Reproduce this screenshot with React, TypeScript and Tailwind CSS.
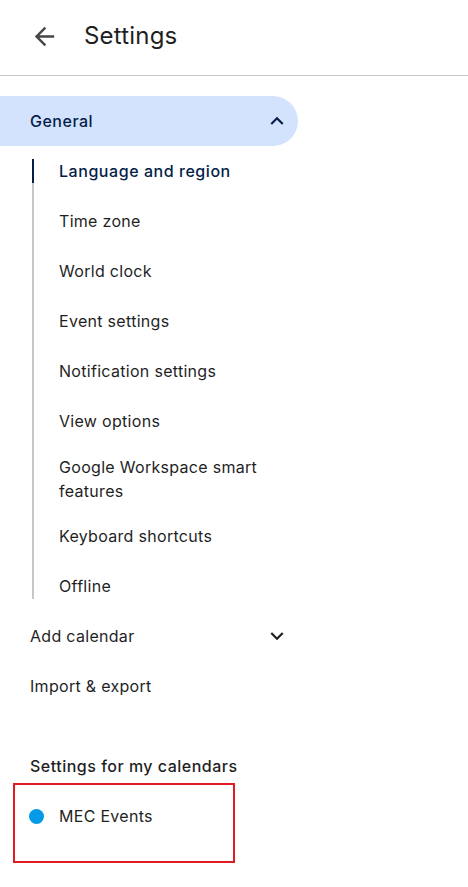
const subItems = [
  'Language and region',
  'Time zone',
  'World clock',
  'Event settings',
  'Notification settings',
  'View options',
  'Google Workspace smart features',
  'Keyboard shortcuts',
  'Offline',
]

const ExpandLess = ({ className }: { className?: string }) => (
  <svg viewBox="0 0 24 24" width={26} height={26} className={className} fill="currentColor">
    <path d="M12 8l-6 6 1.41 1.41L12 10.83l4.59 4.58L18 14z" />
  </svg>
)

const ExpandMore = ({ className }: { className?: string }) => (
  <svg viewBox="0 0 24 24" width={26} height={26} className={className} fill="currentColor">
    <path d="M16.59 8.59L12 13.17 7.41 8.59 6 10l6 6 6-6z" />
  </svg>
)

const App = () => {
  return (
    <div className="w-[468px] min-h-[887px] bg-white text-[#1f1f1f] font-['Inter',sans-serif] text-[16px] tracking-[0.3px]">
      <header className="h-[76px] flex items-center pb-[3px] border-b border-[#c7c7c7]">
        <svg viewBox="0 0 24 24" width={29} height={29} className="ml-[30px] text-[#444746]" fill="currentColor">
          <path d="M20 11H7.83l5.59-5.59L12 4l-8 8 8 8 1.41-1.41L7.83 13H20v-2z" />
        </svg>
        <h1 className="ml-[25px] text-[24px] leading-8 tracking-[0.2px] text-[#1f1f1f]">Settings</h1>
      </header>

      <nav className="mt-5">
        <div className="w-[298px] h-[50px] rounded-r-full bg-[#d3e3fd] flex items-center justify-between pl-[30px] pr-[8px] text-[#041e49]">
          <span className="font-medium tracking-[0.5px]">General</span>
          <ExpandLess />
        </div>

        <div className="ml-8 w-[266px] flex flex-col border-l-2 border-[#c7c7c7] mt-[13px] mb-[12px]">
          {subItems.map((item, i) => (
            <div
              key={item}
              className={
                'flex items-center min-h-[50px] py-[8.5px] pr-6 leading-6 ' +
                (i === 0 ? '-mt-[13px] ' : '') +
                (i === subItems.length - 1 ? '-mb-[12px] ' : '')
              }
            >
              {i === 0 ? (
                <>
                  <div className="w-[2px] h-6 -ml-[2px] mr-[25px] bg-[#041e49] shrink-0" />
                  <span className="font-medium tracking-[0.55px] text-[#041e49]">{item}</span>
                </>
              ) : (
                <span className="pl-[25px]">{item}</span>
              )}
            </div>
          ))}
        </div>

        <div className="w-[298px] h-[50px] flex items-center justify-between pl-[30px] pr-[8px]">
          <span>Add calendar</span>
          <ExpandMore />
        </div>
        <div className="h-[50px] flex items-center pl-[30px]">
          <span>Import &amp; export</span>
        </div>

        <div className="mt-[30px] h-[50px] flex items-center pl-[30px] font-medium tracking-[0.5px]">
          Settings for my calendars
        </div>

        <div className="relative h-[50px] flex items-center pl-[29px]">
          <span className="w-[15px] h-[15px] rounded-full bg-[#039be5] shrink-0" />
          <span className="ml-[15px]">MEC Events</span>
          <div className="absolute left-[13px] -top-[8px] w-[222px] h-[80px] border-2 border-[#e01b24]" />
        </div>
      </nav>
    </div>
  )
}

export default App
